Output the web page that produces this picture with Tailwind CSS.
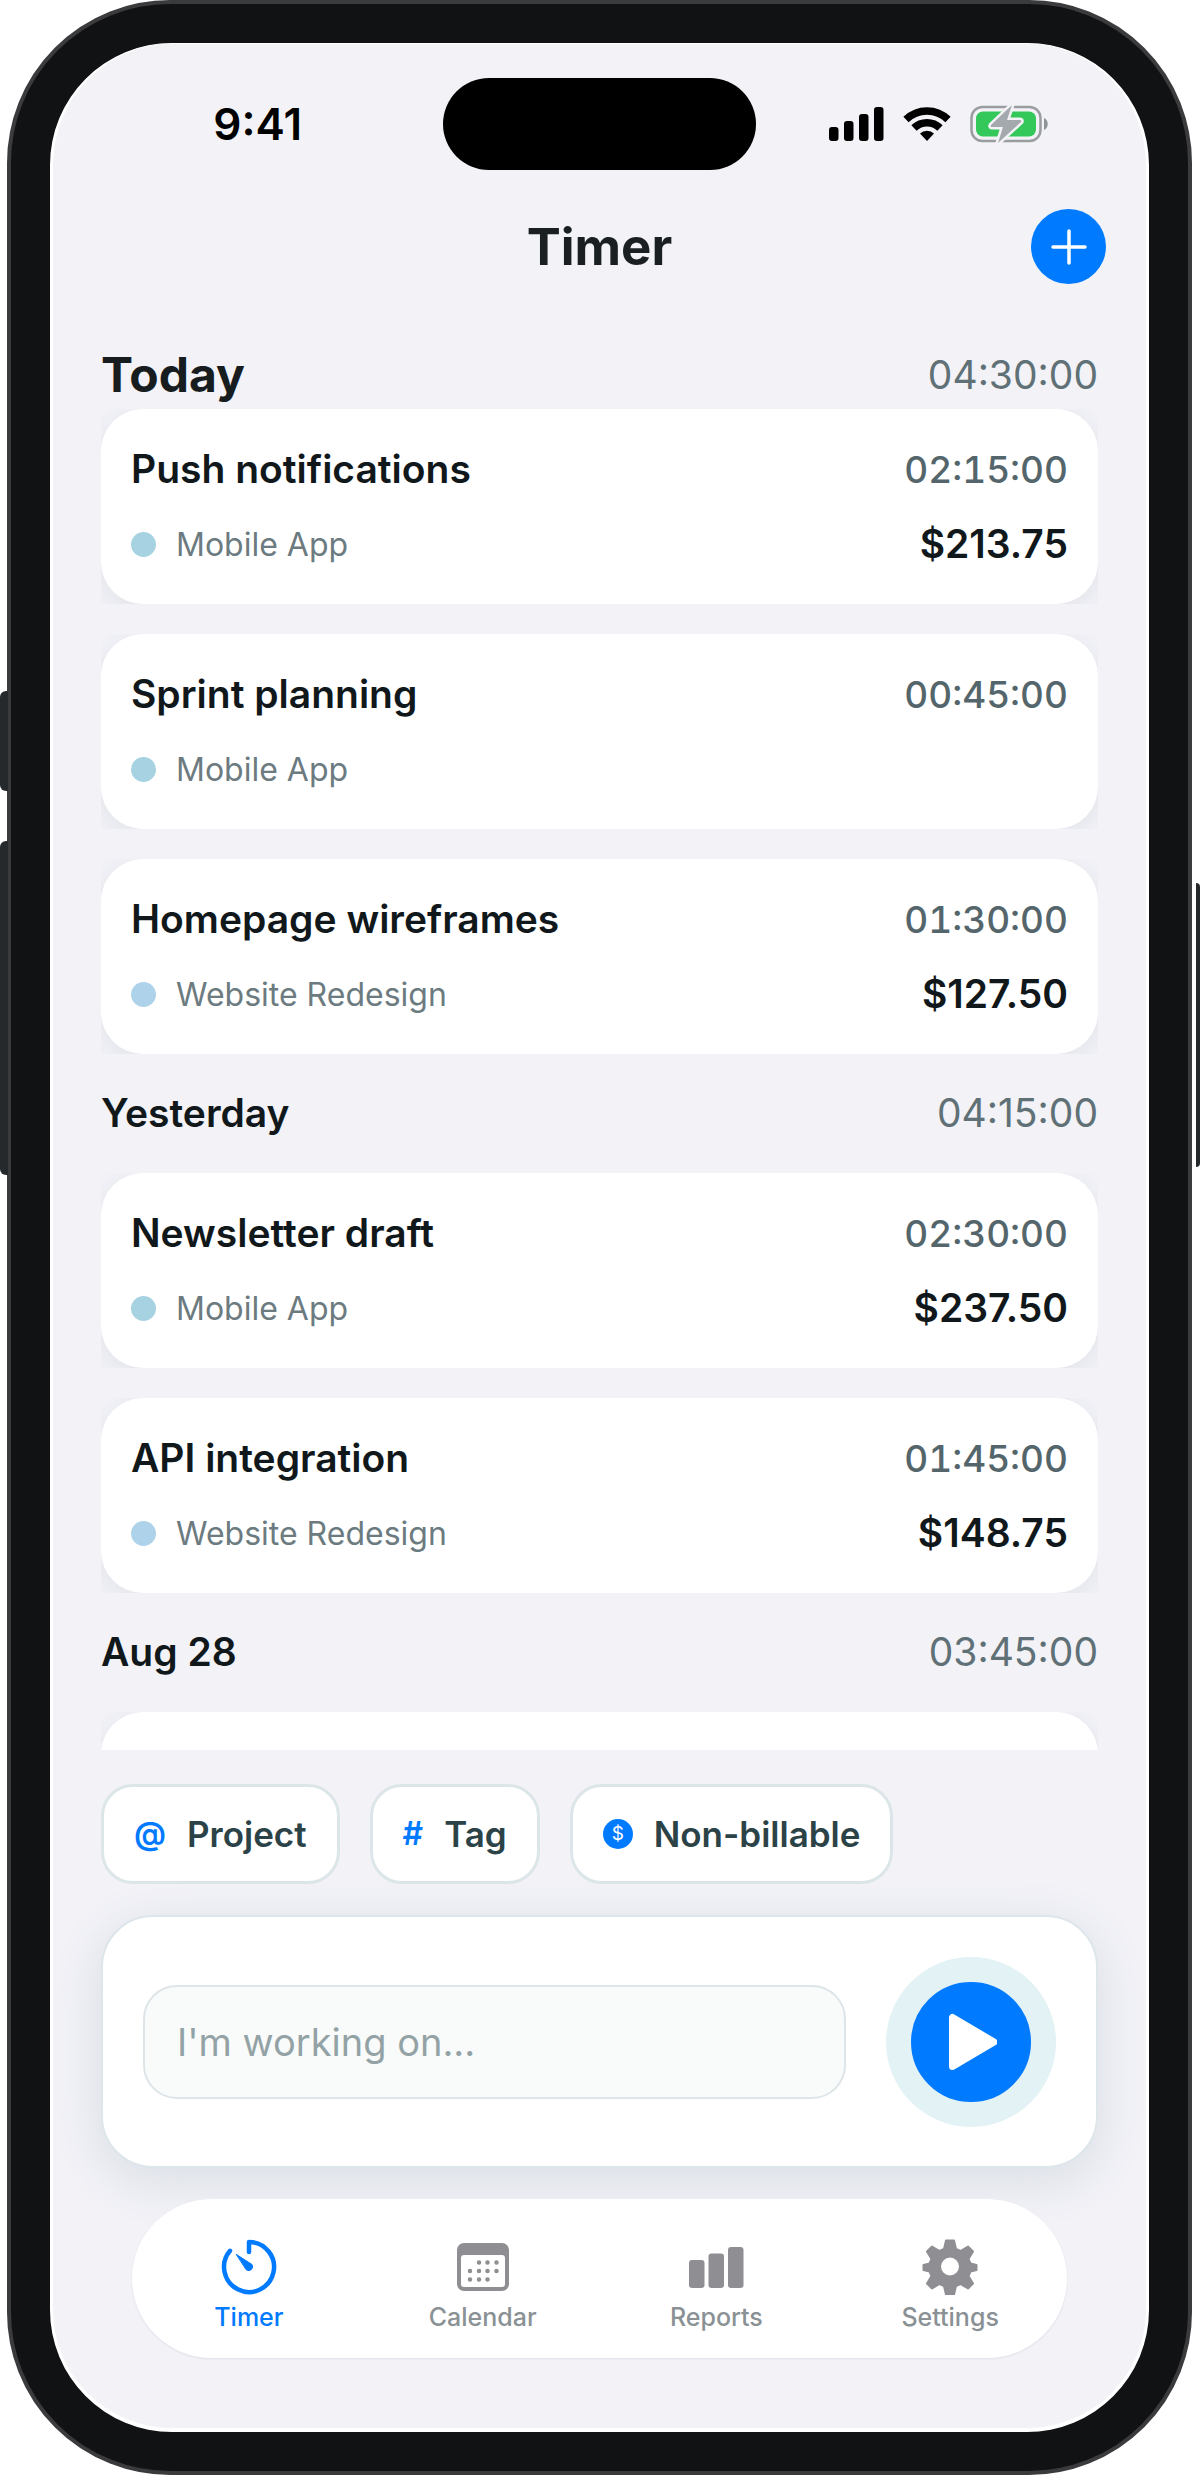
<!DOCTYPE html>
<html lang="en">

<head>
    <meta charset="UTF-8">
    <meta name="viewport" content="width=device-width, initial-scale=1.0">
    <title>Timer</title>
    <script src="https://cdn.jsdelivr.net/npm/@tailwindcss/browser@4"></script>
</head>

<body class="h-screen bg-white font-[Inter,sans-serif] text-[#11181b]">
    <!-- #region Device -->
    <div class="relative h-full pl-[7px] pr-2">
        <!-- side keys -->
        <div class="absolute left-0 top-[691px] w-2 h-[100px] rounded-l-md bg-[#25292c]"></div>
        <div class="absolute left-0 top-[841px] w-2 h-[334px] rounded-l-md bg-[#25292c]"></div>
        <div class="absolute right-0 top-[883px] w-1 h-[284px] rounded-r-md bg-[#25292c]"></div>

        <div class="h-full rounded-[163px] border-4 border-[#3b3b3e] bg-[#101214] p-[39px]">
            <div class="flex flex-col h-full rounded-[122px] border-x-[3px] border-t border-b-4 border-white bg-[#f2f2f7] overflow-hidden">

                <!-- #region Status bar -->
                <div class="grid grid-cols-[1fr_313px_1fr] items-center pt-[34px]">
                    <span class="justify-self-end pr-[141px] text-[44px] font-semibold text-black">9:41</span>
                    <div class="h-[92px] rounded-full bg-black"></div>
                    <div class="flex items-center gap-[19px] pl-[73px]">
                        <svg width="55" height="36" viewBox="0 0 55 36" fill="black">
                            <rect x="0" y="21" width="9.500" height="14" rx="3"></rect>
                            <rect x="15" y="15" width="9.500" height="20" rx="3"></rect>
                            <rect x="30" y="8" width="9.500" height="27" rx="3"></rect>
                            <rect x="45" y="1" width="9.500" height="34" rx="3"></rect>
                        </svg>
                        <svg width="48" height="36" viewBox="0 0 48 36" fill="none" stroke="black" stroke-width="7.500">
                            <path d="M3 13.500a30 30 0 0 1 42 0"></path>
                            <path d="M11 22a18.500 18.500 0 0 1 26 0"></path>
                            <path d="M24 35l-7-7.500a10 10 0 0 1 14 0z" fill="black" stroke="none"></path>
                        </svg>
                        <svg width="78" height="38" viewBox="0 0 78 38">
                            <rect x="1.500" y="2" width="69" height="34" rx="11" fill="none" stroke="#9a9da0" stroke-width="2.500"></rect>
                            <rect x="6" y="6.500" width="60" height="25" rx="7" fill="#34c759"></rect>
                            <path d="M74 13c5 2 5 10 0 12z" fill="#8e9597"></path>
                            <path d="M42 0L21 20q-1 2 1 2h11L28 38l23-21q1-2-1-2H37z" fill="#a3a9ac" stroke="#f2f2f7" stroke-width="5" stroke-linejoin="round" paint-order="stroke"></path>
                        </svg>
                    </div>
                </div>
                <!-- #endregion Status bar -->

                <header class="grid grid-cols-[75px_1fr_75px] items-center px-10 pt-[39px]">
                    <h1 class="col-start-2 text-center text-[51px] leading-[75px] font-bold text-[#1a1f22]">Timer</h1>
                    <button type="button" aria-label="Add entry" class="flex items-center justify-center size-[75px] rounded-full bg-[#007aff]">
                        <svg width="36" height="36" viewBox="0 0 36 36" stroke="white" stroke-width="3.500" stroke-linecap="round">
                            <path d="M18 2v32M2 18h32"></path>
                        </svg>
                    </button>
                </header>

                <!-- #region Entries -->
                <main class="flex-1 min-h-0 overflow-hidden px-12 mt-[57px]">
                    <div class="flex items-center justify-between h-[68px]">
                        <h2 class="text-[48px] font-bold text-[#171c1f]">Today</h2>
                        <span class="text-[39px] text-[#5f7176]">04:30:00</span>
                    </div>
                    <div class="flex flex-col gap-[30px]">
                        <div class="overflow-hidden">
                            <article class="h-[195px] rounded-[42px] bg-white px-[30px] pt-[23px] shadow-[0_6px_24px_rgba(60,90,110,0.09)]">
                                <div class="flex items-center justify-between h-[75px]">
                                    <h3 class="text-[39px] font-semibold">Push notifications</h3>
                                    <span class="text-[37px] font-medium tabular-nums text-[#54666b]">02:15:00</span>
                                </div>
                                <div class="flex items-center h-[75px]">
                                    <span class="size-[25px] rounded-full bg-[#a6d2e1]"></span>
                                    <span class="ml-5 text-[32px] text-[#6c7b80]">Mobile App</span>
                                    <span class="ml-auto text-[39px] font-semibold">$213.75</span>
                                </div>
                            </article>
                        </div>
                        <div class="overflow-hidden">
                            <article class="h-[195px] rounded-[42px] bg-white px-[30px] pt-[23px] shadow-[0_6px_24px_rgba(60,90,110,0.09)]">
                                <div class="flex items-center justify-between h-[75px]">
                                    <h3 class="text-[39px] font-semibold">Sprint planning</h3>
                                    <span class="text-[37px] font-medium tabular-nums text-[#54666b]">00:45:00</span>
                                </div>
                                <div class="flex items-center h-[75px]">
                                    <span class="size-[25px] rounded-full bg-[#a6d2e1]"></span>
                                    <span class="ml-5 text-[32px] text-[#6c7b80]">Mobile App</span>
                                </div>
                            </article>
                        </div>
                        <div class="overflow-hidden">
                            <article class="h-[195px] rounded-[42px] bg-white px-[30px] pt-[23px] shadow-[0_6px_24px_rgba(60,90,110,0.09)]">
                                <div class="flex items-center justify-between h-[75px]">
                                    <h3 class="text-[39px] font-semibold">Homepage wireframes</h3>
                                    <span class="text-[37px] font-medium tabular-nums text-[#54666b]">01:30:00</span>
                                </div>
                                <div class="flex items-center h-[75px]">
                                    <span class="size-[25px] rounded-full bg-[#aed2ea]"></span>
                                    <span class="ml-5 text-[32px] text-[#6c7b80]">Website Redesign</span>
                                    <span class="ml-auto text-[39px] font-semibold">$127.50</span>
                                </div>
                            </article>
                        </div>
                    </div>

                    <div class="flex items-center justify-between h-[119px]">
                        <h2 class="text-[39px] font-semibold">Yesterday</h2>
                        <span class="text-[39px] text-[#5f7176]">04:15:00</span>
                    </div>
                    <div class="flex flex-col gap-[30px]">
                        <div class="overflow-hidden">
                            <article class="h-[195px] rounded-[42px] bg-white px-[30px] pt-[23px] shadow-[0_6px_24px_rgba(60,90,110,0.09)]">
                                <div class="flex items-center justify-between h-[75px]">
                                    <h3 class="text-[39px] font-semibold">Newsletter draft</h3>
                                    <span class="text-[37px] font-medium tabular-nums text-[#54666b]">02:30:00</span>
                                </div>
                                <div class="flex items-center h-[75px]">
                                    <span class="size-[25px] rounded-full bg-[#a6d2e1]"></span>
                                    <span class="ml-5 text-[32px] text-[#6c7b80]">Mobile App</span>
                                    <span class="ml-auto text-[39px] font-semibold">$237.50</span>
                                </div>
                            </article>
                        </div>
                        <div class="overflow-hidden">
                            <article class="h-[195px] rounded-[42px] bg-white px-[30px] pt-[23px] shadow-[0_6px_24px_rgba(60,90,110,0.09)]">
                                <div class="flex items-center justify-between h-[75px]">
                                    <h3 class="text-[39px] font-semibold">API integration</h3>
                                    <span class="text-[37px] font-medium tabular-nums text-[#54666b]">01:45:00</span>
                                </div>
                                <div class="flex items-center h-[75px]">
                                    <span class="size-[25px] rounded-full bg-[#aed2ea]"></span>
                                    <span class="ml-5 text-[32px] text-[#6c7b80]">Website Redesign</span>
                                    <span class="ml-auto text-[39px] font-semibold">$148.75</span>
                                </div>
                            </article>
                        </div>
                    </div>

                    <div class="flex items-center justify-between h-[119px]">
                        <h2 class="text-[39px] font-semibold">Aug 28</h2>
                        <span class="text-[39px] text-[#5f7176]">03:45:00</span>
                    </div>
                    <div class="overflow-hidden">
                        <article class="h-[195px] rounded-[42px] bg-white shadow-[0_6px_24px_rgba(60,90,110,0.09)]"></article>
                    </div>
                </main>
                <!-- #endregion Entries -->

                <!-- #region Composer -->
                <div class="flex gap-[30px] px-12 pt-[34px] text-[35px] font-semibold text-[#2b4347]">
                    <button type="button" class="flex items-center gap-[21px] h-[100px] px-[30px] rounded-[32px] border-[3px] border-[#dce6e9] bg-white">
                        <span class="text-[32px] text-[#007aff]">@</span>Project
                    </button>
                    <button type="button" class="flex items-center gap-[21px] h-[100px] px-[30px] rounded-[32px] border-[3px] border-[#dce6e9] bg-white">
                        <span class="text-[32px] text-[#007aff]">#</span>Tag
                    </button>
                    <button type="button" class="flex items-center gap-[21px] h-[100px] px-[30px] rounded-[32px] border-[3px] border-[#dce6e9] bg-white">
                        <span class="flex items-center justify-center size-[30px] rounded-full bg-[#007aff] text-[19px] font-normal text-white">$</span>Non-billable
                    </button>
                </div>
                <form class="flex items-center justify-between gap-10 h-[253px] mx-12 mt-[31px] px-10 rounded-[52px] border-2 border-[#dde6ea] bg-white shadow-[0_12px_48px_rgba(90,120,135,0.16)]">
                    <input type="text" placeholder="I'm working on..." aria-label="What are you working on"
                           class="flex-1 min-w-0 h-[114px] px-8 rounded-[34px] border-2 border-[#dde5e9] bg-[#f9fbfa] text-[38px] placeholder:text-[#93a2a5]">
                    <button type="button" aria-label="Start timer" class="flex items-center justify-center size-[170px] rounded-full border-[25px] border-[#e3f2f5] bg-[#007aff]">
                        <svg width="52" height="58" viewBox="0 0 52 58" fill="white" stroke="white" stroke-width="7" stroke-linejoin="round">
                            <path d="M7.500 4.500v49L49 29z"></path>
                        </svg>
                    </button>
                </form>
                <!-- #endregion Composer -->

                <!-- #region Tab bar -->
                <nav class="relative grid grid-cols-4 h-[159px] mx-[79px] mt-[31px] mb-[70px] rounded-full bg-white text-[25px] leading-[30px] font-medium text-[#8a9194] shadow-[0_1px_2px_rgba(90,120,135,0.14)]">
                    <a href="#" class="flex flex-col items-center pt-10 gap-[7px] text-[#007aff]">
                        <svg width="56" height="56" viewBox="0 0 56 56" fill="none" stroke="currentColor" stroke-width="4.500" stroke-linecap="round" stroke-linejoin="round">
                            <path d="M28 13V3a25 25 0 1 1-19 8.800"></path>
                            <path d="M15.500 15.500l15.500 10a4 4 0 0 1-5.500 5.500z" fill="currentColor" stroke-width="1"></path>
                        </svg>
                        Timer
                    </a>
                    <a href="#" class="flex flex-col items-center pt-10 gap-[7px]">
                        <svg width="56" height="56" viewBox="0 0 56 56" fill="#8e8e93">
                            <path fill-rule="evenodd" d="M9 4h38a7 7 0 0 1 7 7v34a7 7 0 0 1-7 7H9a7 7 0 0 1-7-7V11a7 7 0 0 1 7-7zM9 16a3 3 0 0 0-3 3v26a3 3 0 0 0 3 3h38a3 3 0 0 0 3-3V19a3 3 0 0 0-3-3z"></path>
                            <path d="M24 23.500v0M32.500 23.500v0M41.500 23.500v0M15 32v0M24 32v0M32.500 32v0M41.500 32v0M15 40.500v0M24 40.500v0M32.500 40.500v0" stroke="#8e8e93" stroke-width="4.500" stroke-linecap="round"></path>
                        </svg>
                        Calendar
                    </a>
                    <a href="#" class="flex flex-col items-center pt-10 gap-[7px]">
                        <svg width="56" height="56" viewBox="0 0 56 56" fill="#8e8e93">
                            <rect x="1" y="21" width="15.500" height="28" rx="3"></rect>
                            <rect x="20.500" y="14.500" width="15.500" height="34.500" rx="3"></rect>
                            <rect x="40" y="8" width="15.500" height="41" rx="3"></rect>
                        </svg>
                        Reports
                    </a>
                    <a href="#" class="flex flex-col items-center pt-10 gap-[7px]">
                        <svg width="56" height="56" viewBox="0 0 56 56" fill="#8e8e93" stroke="#8e8e93" stroke-width="2" stroke-linejoin="round">
                            <path fill-rule="evenodd" d="M24 1.500h8l2 8.500 4.500 2 7.500-4.500 5 5-4.500 7.500 2 4.500 6 1.500v5l-6 1.500-2 4.500 4.500 7.500-5 5-7.500-4.500-4.500 2-2 8.500h-8l-2-8.500-4.500-2-7.500 4.500-5-5 4.500-7.500-2-4.500-6-1.500v-5l6-1.500 2-4.500-4.500-7.500 5-5 7.500 4.500 4.500-2zM28 17.500a10 10 0 1 0 0 20 10 10 0 0 0 0-20z"></path>
                        </svg>
                        Settings
                    </a>
                </nav>
                <!-- #endregion Tab bar -->
            </div>
        </div>
    </div>
    <!-- #endregion Device -->
</body>

</html>
